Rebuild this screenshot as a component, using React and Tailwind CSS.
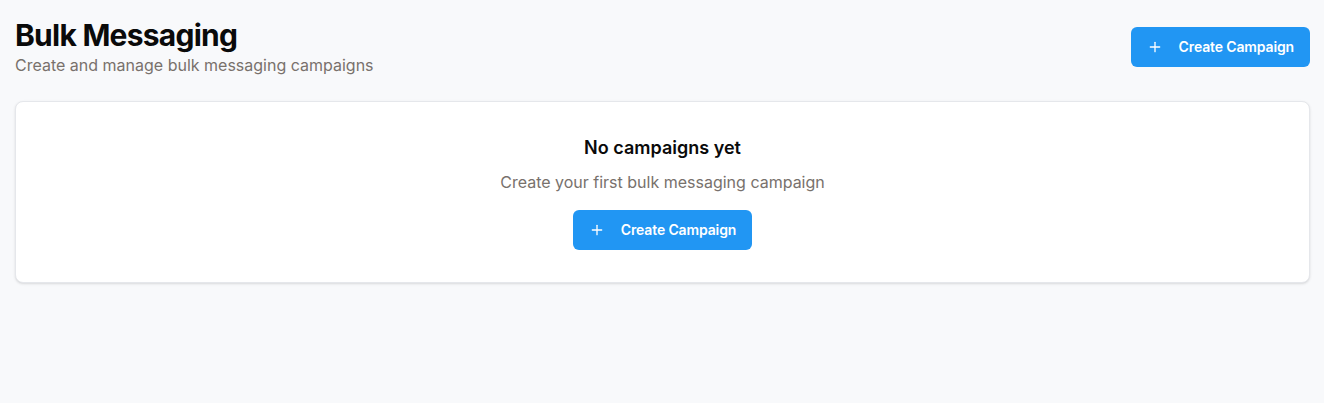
import React from "react";

function PlusIcon() {
  return (
    <svg width="16" height="16" viewBox="0 0 24 24" fill="none" stroke="currentColor" strokeWidth="2" strokeLinecap="round" strokeLinejoin="round">
      <path d="M5 12h14" />
      <path d="M12 5v14" />
    </svg>
  );
}

function CreateButton() {
  return (
    <button className="flex h-10 items-center gap-4 rounded-md bg-[#2196f3] px-4 text-sm font-semibold tracking-[-0.01em] text-white">
      <PlusIcon />
      <span>Create Campaign</span>
    </button>
  );
}

export default function App() {
  return (
    <div className="min-h-[403px] bg-[#f8f9fb] pb-4 pl-[15px] pr-[14px] pt-[17px] font-['Inter',sans-serif]">
      <div className="mb-6 flex items-center justify-between">
        <div>
          <h1 className="text-3xl font-bold tracking-tight text-[#0a0a0a]">Bulk Messaging</h1>
          <p className="text-base text-[#78716c]">Create and manage bulk messaging campaigns</p>
        </div>
        <CreateButton />
      </div>
      <div className="flex flex-col items-center rounded-lg border border-[#e5e7eb] bg-white p-8 shadow-sm">
        <h3 className="text-lg font-semibold text-[#0a0a0a]">No campaigns yet</h3>
        <p className="mt-2 text-base text-[#78716c]">Create your first bulk messaging campaign</p>
        <div className="mt-4">
          <CreateButton />
        </div>
      </div>
    </div>
  );
}
